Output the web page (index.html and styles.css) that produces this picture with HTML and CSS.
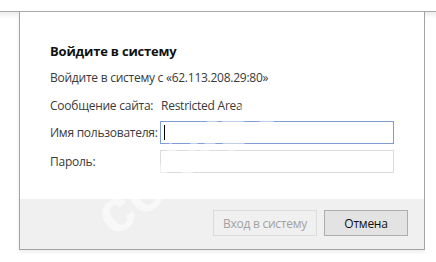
FILE: index.html
```html
<!DOCTYPE html>
<html lang="ru">
<head>
    <meta charset="UTF-8">
    <title>Войдите в систему</title>
    <link rel="stylesheet" href="styles.css">
</head>
<body>
<div class="page">

    <div class="chrome"></div>

    <div class="stage">
        <div class="gutter gutter-left"></div>

        <div class="dialog">
            <div class="dialog-body">
                <div class="title">Войдите в систему</div>
                <div class="line origin">Войдите в систему с «62.113.208.29:80»</div>
                <div class="line realm">
                    <span class="realm-label">Сообщение сайта:</span>
                    <span>Restricted Area</span>
                </div>

                <div class="fields">
                    <label class="field-label">Имя пользователя:</label>
                    <div class="field focused"><span class="caret"></span></div>
                    <label class="field-label">Пароль:</label>
                    <div class="field"></div>
                </div>
            </div>

            <div class="dialog-footer">
                <button type="button" class="btn btn-login" disabled>Вход в систему</button>
                <button type="button" class="btn btn-cancel">Отмена</button>
            </div>
        </div>

        <div class="gutter"></div>
    </div>

    <!-- watermark over the screenshot -->
    <div class="watermark">codeby.net</div>

</div>
</body>
</html>
```

FILE: styles.css
```css
html, body {
    margin: 0;
    background: #fff;
    overflow: hidden;
}
body {
    font-family: 'Open Sans', 'Noto Sans', sans-serif;
    font-size: 12px;
    color: #3a3a3a;
}
.page {
    width: 436px;
    height: 262px;
    overflow: hidden;
    position: relative;
}
.chrome {
    height: 11px;
    border-bottom: 1px solid #a9a9a9;
}
.stage {
    display: flex;
}
.gutter {
    flex: 1;
    background: linear-gradient(#ececec, #fff 6px);
}
.gutter-left {
    flex: 0 0 19px;
}
.dialog {
    width: 404px;
    border: 1px solid #a3a3a3;
    border-top: none;
    background: #fff;
    box-shadow: 0 2px 4px rgba(0, 0, 0, 0.08);
}
.dialog-body {
    padding: 29px 0 26px 30px;
}
.title {
    font-size: 13px;
    font-weight: 700;
    color: #111;
    line-height: 20px;
    letter-spacing: -0.2px;
}
.line {
    line-height: 18px;
    letter-spacing: -0.25px;
}
.origin {
    margin-top: 8px;
}
.realm {
    margin-top: 10px;
    display: flex;
}
.realm-label {
    width: 111px;
}
.fields {
    margin-top: 6px;
    display: grid;
    grid-template-columns: 110px 234px;
    row-gap: 6px;
    align-items: center;
}
.field-label {
    letter-spacing: -0.25px;
}
.field {
    height: 21px;
    border: 1px solid #dcdcdc;
    background: #fff;
    display: flex;
    align-items: center;
}
.field.focused {
    border-color: #7f9fd4;
}
.caret {
    width: 1px;
    height: 15px;
    margin-left: 3px;
    background: #000;
}
.dialog-footer {
    height: 50px;
    background: #f0f0f0;
    display: flex;
    justify-content: flex-end;
    align-items: flex-start;
    gap: 7px;
    padding-right: 16px;
}
.btn {
    margin-top: 11px;
    height: 26px;
    font-family: inherit;
    font-size: 12px;
    letter-spacing: -0.25px;
    padding: 0;
}
.btn-login {
    width: 104px;
    background: #f0f0f0;
    border: 1px solid #dcdcdc;
    color: #a2a2a2;
}
.btn-cancel {
    width: 84px;
    background: #e3e3e3;
    border: 1px solid #adadad;
    color: #111;
}
.watermark {
    position: absolute;
    left: 72px;
    top: 95px;
    font-family: 'Liberation Sans', sans-serif;
    font-weight: 700;
    font-size: 60px;
    line-height: 70px;
    white-space: nowrap;
    color: rgba(255, 255, 255, 0.5);
    transform: rotate(-36deg);
    pointer-events: none;
}
```
